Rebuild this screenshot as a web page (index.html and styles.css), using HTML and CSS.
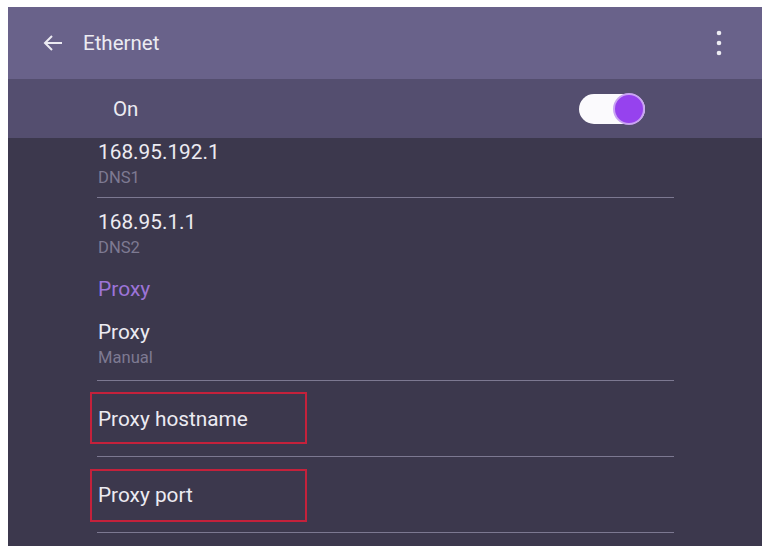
FILE: index.html
```html
<!DOCTYPE html>
<html lang="en">
<head>
    <meta charset="utf-8"/>
    <title>Ethernet</title>
    <link rel="stylesheet" href="styles.css">
</head>
<body>
<div class="screen">
    <div class="appbar">
        <svg class="back" width="22" height="22" viewBox="0 0 22 22">
            <path d="M20 11H3M10 4l-7 7 7 7" fill="none" stroke="#ecebf2" stroke-width="2"/>
        </svg>
        <span class="title">Ethernet</span>
        <svg class="more" width="8" height="26" viewBox="0 0 8 26">
            <circle cx="4" cy="3" r="2.3" fill="#ecebf2"/>
            <circle cx="4" cy="13" r="2.3" fill="#ecebf2"/>
            <circle cx="4" cy="23" r="2.3" fill="#ecebf2"/>
        </svg>
    </div>

    <div class="switchbar">
        <span class="switch-label">On</span>
        <div class="toggle"><div class="knob"></div></div>
    </div>

    <div class="list">
        <div class="item item-first">
            <div class="item-title">168.95.192.1</div>
            <div class="item-sub">DNS1</div>
        </div>
        <div class="item no-line">
            <div class="item-title">168.95.1.1</div>
            <div class="item-sub">DNS2</div>
        </div>
        <div class="category">Proxy</div>
        <div class="item">
            <div class="item-title">Proxy</div>
            <div class="item-sub">Manual</div>
        </div>
        <div class="item item-single">
            <div class="item-title">Proxy hostname</div>
            <div class="mark"></div>
        </div>
        <div class="item item-single">
            <div class="item-title">Proxy port</div>
            <div class="mark mark-low"></div>
        </div>
    </div>
</div>
</body>
</html>
```

FILE: styles.css
```css
body {
    margin: 0;
    padding: 0;
    background: #ffffff;
    font-family: Roboto, "Liberation Sans", sans-serif;
}

.screen {
    margin: 7px 0 0 8px;
    width: 754px;
    height: 539px;
    overflow: hidden;
    background: #3c384d;
}

/* top bar */
.appbar {
    height: 72px;
    display: flex;
    align-items: center;
    padding: 0 39px 0 34px;
    background: #69628a;
}

.back {
    margin-right: 19px;
}

.title {
    color: #ecebf2;
    font-size: 20.5px;
    flex: 1;
}

/* on / off bar */
.switchbar {
    height: 59px;
    display: flex;
    align-items: center;
    justify-content: space-between;
    padding: 0 117px 0 105px;
    background: #544e6f;
}

.switch-label {
    color: #ecebf2;
    font-size: 20.5px;
}

.toggle {
    width: 66px;
    height: 30px;
    border-radius: 15px;
    background: #fbfafd;
    display: flex;
    align-items: center;
    justify-content: flex-end;
}

.knob {
    width: 32px;
    height: 32px;
    box-sizing: border-box;
    border-radius: 50%;
    background: #9642ee;
    border: 2px solid #c9a3f3;
}

/* list */
.list {
    margin-left: 89px;
    width: 577px;
}

.item {
    position: relative;
    padding: 12px 0 13px 1px;
    border-bottom: 1px solid #7c7891;
}

.item-first {
    padding-top: 2px;
    padding-bottom: 10px;
}

.no-line {
    border-bottom: none;
}

.item-single {
    padding-top: 26px;
    padding-bottom: 25px;
}

.item-title {
    color: #ecebf2;
    font-size: 20.8px;
    line-height: 24px;
}

.item-sub {
    margin-top: 5px;
    color: #7e7a92;
    font-size: 16.6px;
    line-height: 18px;
}

.category {
    padding: 6px 0 6px 1px;
    color: #9c74d8;
    font-size: 21px;
    line-height: 26px;
}

/* red annotation boxes */
.mark {
    position: absolute;
    top: 11px;
    left: -7px;
    width: 217px;
    height: 52px;
    box-sizing: border-box;
    border: 2px solid #c4213b;
}

.mark-low {
    top: 12px;
    height: 53px;
}
```
